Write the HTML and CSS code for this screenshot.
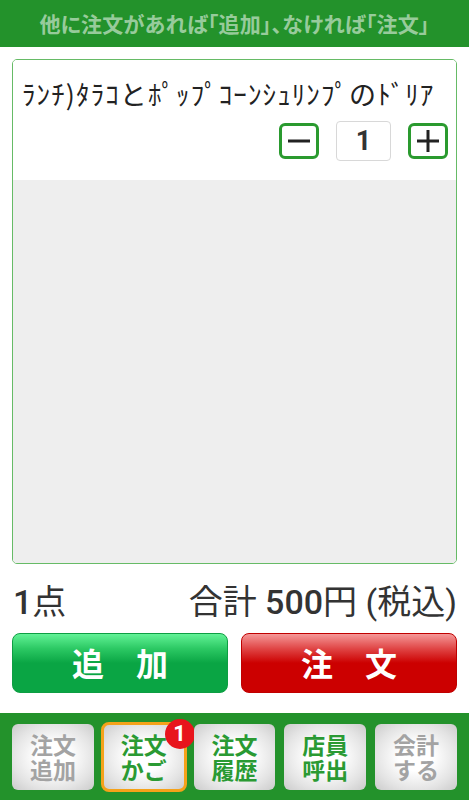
FILE: index.html
```html
<!DOCTYPE html>
<html lang="ja">
<head>
<meta charset="utf-8">
<link rel="stylesheet" href="styles.css">
</head>
<body>
<div class="app">
  <header class="header">他に注文があれば「追加」、なければ「注文」</header>
  <main class="main">
    <section class="card">
      <div class="item">
        <div class="item-name">ﾗﾝﾁ)ﾀﾗｺとﾎﾟｯﾌﾟｺｰﾝｼｭﾘﾝﾌﾟのﾄﾞﾘｱ</div>
        <div class="qty-row">
          <button class="qty-btn" aria-label="minus">
            <svg width="24" height="24" viewBox="0 0 24 24"><path d="M1 12H23" stroke="#222" stroke-width="3"/></svg>
          </button>
          <div class="qty-value">1</div>
          <button class="qty-btn" aria-label="plus">
            <svg width="24" height="24" viewBox="0 0 24 24"><path d="M1 12H23M12 1V23" stroke="#222" stroke-width="3"/></svg>
          </button>
        </div>
      </div>
      <div class="empty"></div>
    </section>
    <div class="summary">
      <span class="count"><span class="num">1</span>点</span>
      <span class="total">合計 <span class="num">500</span>円 (税込)</span>
    </div>
    <div class="actions">
      <button class="action add">追　加</button>
      <button class="action order">注　文</button>
    </div>
  </main>
  <nav class="nav">
    <div class="nav-btn disabled"><span class="line">注文</span><span class="line">追加</span></div>
    <div class="nav-btn selected"><span class="line">注文</span><span class="line">かご</span><span class="badge">1</span></div>
    <div class="nav-btn"><span class="line">注文</span><span class="line">履歴</span></div>
    <div class="nav-btn"><span class="line">店員</span><span class="line">呼出</span></div>
    <div class="nav-btn disabled"><span class="line">会計</span><span class="line">する</span></div>
  </nav>
</div>
</body>
</html>
```

FILE: styles.css
```css
* { box-sizing: border-box; }
html, body {
  margin: 0;
  padding: 0;
  background: #fff;
  font-family: Roboto, "Noto Sans CJK JP", sans-serif;
}
.app {
  width: 469px;
  height: 800px;
  display: flex;
  flex-direction: column;
  overflow: hidden;
}
.header {
  height: 47px;
  flex: none;
  background: #23922b;
  color: rgba(255, 255, 255, 0.55);
  font-family: "Noto Sans CJK JP", sans-serif;
  font-weight: 700;
  font-size: 21px;
  letter-spacing: 0.2px;
  font-feature-settings: "palt";
  display: flex;
  align-items: center;
  justify-content: center;
  padding-bottom: 2px;
}
.main {
  flex: 1;
  padding: 12px 12px 0;
  display: flex;
  flex-direction: column;
}
.card {
  height: 505px;
  border: 1px solid #66bb66;
  border-radius: 5px;
  overflow: hidden;
  display: flex;
  flex-direction: column;
}
.item {
  height: 120px;
  background: #fff;
  padding: 17px 8px 0 9px;
}
.item-name {
  font-family: "Noto Sans CJK JP", sans-serif;
  font-size: 27px;
  line-height: 34px;
  letter-spacing: 1.1px;
  color: #222;
  white-space: nowrap;
}
.qty-row {
  display: flex;
  justify-content: flex-end;
  align-items: center;
  gap: 17px;
  margin-top: 10px;
}
.qty-btn {
  width: 40px;
  height: 36px;
  border: 3px solid #2a9a2f;
  border-radius: 6px;
  background: #fff;
  padding: 0;
  display: flex;
  align-items: center;
  justify-content: center;
}
.qty-value {
  width: 55px;
  height: 40px;
  border: 1px solid #d8d8d8;
  border-radius: 4px;
  display: flex;
  align-items: center;
  justify-content: center;
  font-size: 27px;
  font-weight: 700;
  color: #333;
}
.empty {
  flex: 1;
  background: #eeeeee;
}
.summary {
  height: 69px;
  display: flex;
  align-items: center;
  justify-content: space-between;
  padding: 2px 0 0 1px;
  color: #333;
  font-size: 34px;
  font-weight: 400;
}
.num {
  font-weight: 500;
}
.actions {
  height: 60px;
  display: flex;
  gap: 13px;
}
.action {
  flex: 1;
  height: 60px;
  border-radius: 8px;
  color: #fff;
  font-family: "Noto Sans CJK JP", sans-serif;
  font-weight: 700;
  font-size: 32px;
  padding: 0 0 2px;
}
.add {
  border: 1px solid #0e9e43;
  background: linear-gradient(#62f296 0%, #2cc964 25%, #0aa544 50%, #0aa544 100%);
}
.order {
  border: 1px solid #c00000;
  background: linear-gradient(#f59898 0%, #e04646 25%, #cc0000 50%, #cc0000 100%);
}
.nav {
  height: 87px;
  flex: none;
  margin-top: 20px;
  background: #23922b;
  display: flex;
  gap: 9px;
  padding: 11px 12px 0;
}
.nav-btn {
  position: relative;
  width: 82px;
  height: 66px;
  border-radius: 6px;
  background: radial-gradient(ellipse at center, #ffffff 30%, #e4e4e4 70%, #cbcbcb 100%);
  color: #2a9a33;
  font-family: "Noto Sans CJK JP", sans-serif;
  font-weight: 700;
  font-size: 23px;
  text-align: center;
  display: flex;
  flex-direction: column;
  align-items: center;
  justify-content: center;
  padding-bottom: 1px;
}
.line {
  display: block;
  height: 25px;
  line-height: 25px;
}
.nav-btn.disabled {
  color: #a3a3a3;
}
.nav-btn.selected {
  outline: 3px solid #f5a21a;
  outline-offset: -1px;
}
.badge {
  position: absolute;
  top: -5px;
  right: -10px;
  width: 30px;
  height: 30px;
  border-radius: 50%;
  background: #e8141c;
  color: #fff;
  font-family: Roboto, sans-serif;
  font-size: 22px;
  line-height: 30px;
  font-weight: 700;
  text-align: center;
}
```
